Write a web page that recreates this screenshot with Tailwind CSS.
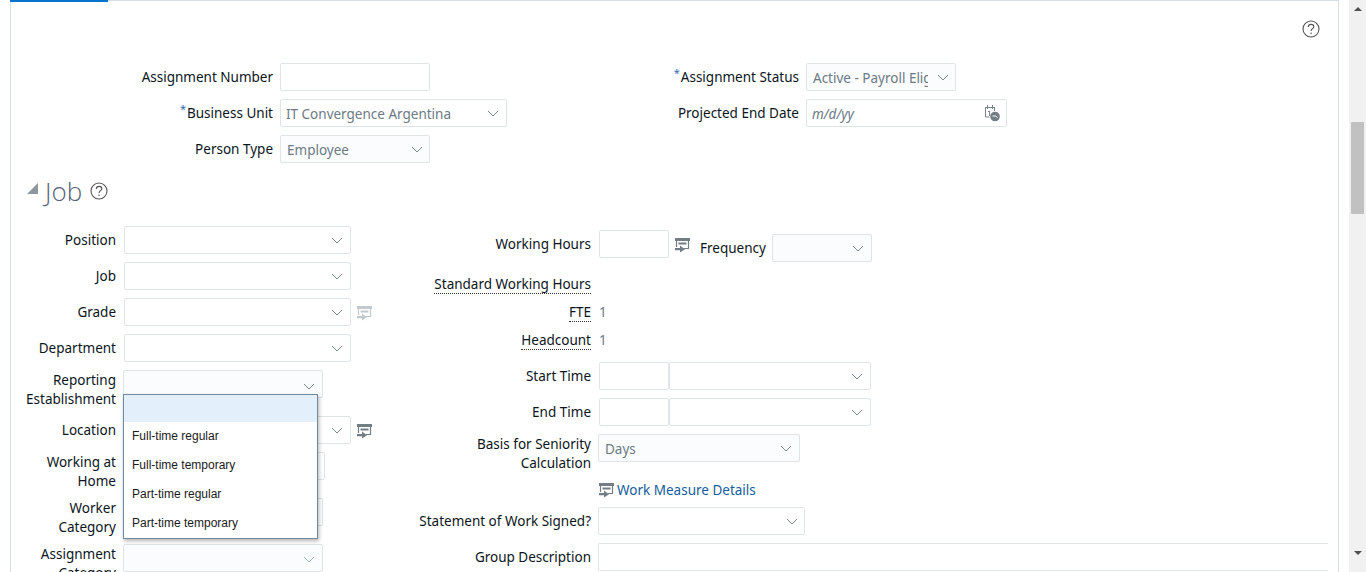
<!DOCTYPE html>
<html lang="en">
<head>
  <meta charset="UTF-8"/>
  <title>Assignment</title>
  <script src="https://cdn.jsdelivr.net/npm/@tailwindcss/browser@4"></script>
</head>
<body class="h-[572px] overflow-hidden bg-white font-['Noto_Sans',sans-serif] text-[13.5px] text-[#0b1520]">
  <!-- Shared icons -->
  <svg class="hidden">
    <symbol id="chev" viewBox="0 0 12 7"><path d="M1 1l5 5 5-5" fill="none" stroke="currentColor" stroke-width="1"/></symbol>
    <symbol id="detail" viewBox="0 0 15 16">
      <path d="M0 1h15v3H0z" fill="currentColor"/>
      <path d="M1.5 4v6M13.5 4v7.5H9" fill="none" stroke="currentColor" stroke-width="1.2"/>
      <path d="M3.5 5.5h8v2h-8z" fill="currentColor"/>
      <path d="M0 11h5V8.5l5 3.7-5 3.3v-2.300H0z" fill="currentColor"/>
    </symbol>
    <symbol id="help" viewBox="0 0 18 18">
      <circle cx="9" cy="9" r="8" fill="none" stroke="currentColor" stroke-width="1.1"/>
      <path d="M6.300 7c0-1.700 1.200-2.600 2.800-2.600s2.700 1 2.700 2.300c0 2-2.700 2-2.700 4.300" fill="none" stroke="currentColor" stroke-width="1.100"/>
      <circle cx="9.100" cy="13.300" r=".8" fill="currentColor"/>
    </symbol>
  </svg>

  <div class="flex h-[572px]">
    <!-- Main panel -->
    <main class="w-[1349px] pl-[10px] pr-[10px]">
      <div class="h-[572px] border-x border-t border-[#d6dfe6] relative">
        <div class="absolute -top-px -left-px w-[98px] h-[2px] bg-[#0572ce]"></div>

        <div class="flex justify-end pr-[18px] pt-[19px] h-[62px]">
          <svg class="w-[18px] h-[18px] text-[#555]"><use href="#help"/></svg>
        </div>

        <!-- Assignment header fields -->
        <section class="flex">
          <div class="w-[600px] flex flex-col gap-2">
            <div class="flex gap-[7px]">
              <label class="w-[262px] h-7 flex items-center justify-end">Assignment Number</label>
              <input class="w-[150px] h-7 border border-[#dfe4e7] rounded-[2px]"/>
            </div>
            <div class="flex gap-[7px]">
              <label class="w-[262px] h-7 flex items-center justify-end"><sup class="text-[#2a6cb0] text-[11px] mt-[2px] mr-px">*</sup>Business Unit</label>
              <div class="w-[227px] h-7 border border-[#dfe4e7] rounded-[2px] flex items-center justify-between pl-[5px] pr-[7px] text-[#6c7a85]">
                <span class="pt-[2px]">IT Convergence Argentina</span>
                <svg class="w-[12px] h-[7px] text-[#7b8790]"><use href="#chev"/></svg>
              </div>
            </div>
            <div class="flex gap-[7px]">
              <label class="w-[262px] h-7 flex items-center justify-end">Person Type</label>
              <div class="w-[150px] h-7 border border-[#dfe4e7] rounded-[2px] bg-[#fbfcfd] flex items-center justify-between pl-[6px] pr-[6px] text-[#6c7a85]">
                <span class="pt-[2px]">Employee</span>
                <svg class="w-[12px] h-[7px] text-[#7b8790]"><use href="#chev"/></svg>
              </div>
            </div>
          </div>
          <div class="flex flex-col gap-2">
            <div class="flex gap-[7px]">
              <label class="w-[188px] h-7 flex items-center justify-end"><sup class="text-[#2a6cb0] text-[11px] mt-[2px] mr-px">*</sup>Assignment Status</label>
              <div class="w-[150px] h-7 border border-[#dfe4e7] rounded-[2px] bg-[#fbfcfd] flex items-center justify-between pl-[6px] pr-[6px] text-[#6c7a85]">
                <span class="w-[115px] pt-[2px] overflow-hidden whitespace-nowrap">Active - Payroll Eligible</span>
                <svg class="w-[12px] h-[7px] text-[#7b8790]"><use href="#chev"/></svg>
              </div>
            </div>
            <div class="flex gap-[7px]">
              <label class="w-[188px] h-7 flex items-center justify-end">Projected End Date</label>
              <div class="w-[201px] h-7 border border-[#dfe4e7] rounded-[2px] flex items-center justify-between pl-[5px] pr-[6px] text-[#6c7a85] italic">
                <span class="pt-[2px]">m/d/yy</span>
                <svg class="w-[16px] h-[18px]" viewBox="0 0 16 18">
                  <path d="M1 3.500h9.500M1.500 3v10h4" fill="none" stroke="#7b858c"/>
                  <path d="M10.500 3v4" stroke="#7b858c"/>
                  <path d="M3.500 1v4M8.500 1v4" stroke="#7b858c"/>
                  <path d="M4 7h2v5H5V8H4z" fill="#7b858c"/>
                  <circle cx="11" cy="12.500" r="4.800" fill="#737d84"/>
                  <path d="M8.500 12h3l2 1.500" fill="none" stroke="#fff"/>
                </svg>
              </div>
            </div>
          </div>
        </section>

        <!-- Job heading -->
        <div class="flex items-center h-[28px] mt-[14px] pl-[16px]">
          <svg class="w-[11px] h-[11px] mb-[6px]" viewBox="0 0 11 11"><path d="M11 0v11H0z" fill="#8f979d"/></svg>
          <h2 class="ml-[7px] font-['Open_Sans',sans-serif] font-light text-[26px] text-[#566378]">Job</h2>
          <svg class="ml-[8px] w-[18px] h-[18px] text-[#555]"><use href="#help"/></svg>
        </div>

        <section class="flex mt-[21px]">
          <!-- Job left column -->
          <div class="w-[375px] flex flex-col gap-2">
            <div class="flex">
              <label class="w-[105px] h-7 flex items-center justify-end">Position</label>
              <div class="ml-2 w-[227px] h-7 border border-[#dfe4e7] rounded-[2px] flex items-center justify-end pr-[7px]"><svg class="w-[12px] h-[7px] text-[#7b8790]"><use href="#chev"/></svg></div>
            </div>
            <div class="flex">
              <label class="w-[105px] h-7 flex items-center justify-end">Job</label>
              <div class="ml-2 w-[227px] h-7 border border-[#dfe4e7] rounded-[2px] flex items-center justify-end pr-[7px]"><svg class="w-[12px] h-[7px] text-[#7b8790]"><use href="#chev"/></svg></div>
            </div>
            <div class="flex items-center">
              <label class="w-[105px] h-7 flex items-center justify-end">Grade</label>
              <div class="ml-2 w-[227px] h-7 border border-[#dfe4e7] rounded-[2px] flex items-center justify-end pr-[7px]"><svg class="w-[12px] h-[7px] text-[#7b8790]"><use href="#chev"/></svg></div>
              <svg class="ml-[6px] mt-[2px] w-[15px] h-[16px] text-[#c3c9cd]"><use href="#detail"/></svg>
            </div>
            <div class="flex">
              <label class="w-[105px] h-7 flex items-center justify-end">Department</label>
              <div class="ml-2 w-[227px] h-7 border border-[#dfe4e7] rounded-[2px] flex items-center justify-end pr-[7px]"><svg class="w-[12px] h-[7px] text-[#7b8790]"><use href="#chev"/></svg></div>
            </div>
            <div class="flex relative h-[38px]">
              <label class="w-[105px] pt-px leading-[19px] text-right">Reporting Establishment</label>
              <div class="ml-[7px] w-[200px] h-7 border border-[#dfe4e7] rounded-[2px] bg-[#fbfcfd] flex items-center justify-end pr-[7px] pt-[5px]"><svg class="w-[12px] h-[7px] text-[#7b8790]"><use href="#chev"/></svg></div>
              <!-- Open list over the fields below -->
              <ul class="absolute z-10 left-[112px] top-[24px] w-[195px] h-[145px] bg-white border border-[#6f8aa1] shadow-[1px_2px_4px_rgba(0,0,0,0.3)] font-['Liberation_Sans',sans-serif] text-[12px] text-[#1a1a1a]">
                <li class="h-[27px] bg-[#e3f0fb]"></li>
                <li class="h-[29px] flex items-center pl-2 pb-[2px]">Full-time regular</li>
                <li class="h-[29px] flex items-center pl-2 pb-[2px]">Full-time temporary</li>
                <li class="h-[29px] flex items-center pl-2 pb-[2px]">Part-time regular</li>
                <li class="h-[29px] flex items-center pl-2 pb-[2px]">Part-time temporary</li>
              </ul>
            </div>
            <div class="flex items-center">
              <label class="w-[105px] h-7 flex items-center justify-end">Location</label>
              <div class="ml-2 w-[227px] h-7 border border-[#dfe4e7] rounded-[2px] flex items-center justify-end pr-[7px]"><svg class="w-[12px] h-[7px] text-[#7b8790]"><use href="#chev"/></svg></div>
              <svg class="ml-[6px] mt-[2px] w-[15px] h-[16px] text-[#737d84]"><use href="#detail"/></svg>
            </div>
            <div class="flex h-[38px]">
              <label class="w-[105px] pt-px leading-[19px] text-right">Working at Home</label>
              <div class="ml-[7px] w-[202px] h-7 border border-[#dfe4e7] rounded-[2px]"></div>
            </div>
            <div class="flex h-[38px]">
              <label class="w-[105px] pt-px leading-[19px] text-right">Worker Category</label>
              <div class="ml-[7px] w-[200px] h-7 border border-[#dfe4e7] rounded-[2px]"></div>
            </div>
            <div class="flex h-[38px]">
              <label class="w-[105px] pt-px leading-[19px] text-right">Assignment Category</label>
              <div class="ml-[7px] w-[200px] h-7 border border-[#dfe4e7] rounded-[2px] bg-[#fbfcfd] flex items-center justify-end pr-[7px] pt-[3px]"><svg class="w-[12px] h-[7px] text-[#9cc4e8]"><use href="#chev"/></svg></div>
            </div>
          </div>

          <!-- Job right column -->
          <div class="flex-1 pt-[4px] pr-[10px] flex flex-col">
            <div class="flex h-[32px]">
              <label class="w-[205px] h-7 flex items-center justify-end">Working Hours</label>
              <div class="ml-2 w-[70px] h-7 border border-[#dfe4e7] rounded-[2px]"></div>
              <svg class="ml-[6px] mt-[7px] w-[15px] h-[16px] text-[#737d84]"><use href="#detail"/></svg>
              <span class="ml-[10px] mt-[4px] h-7 flex items-center">Frequency</span>
              <div class="ml-[6px] mt-[4px] w-[100px] h-7 border border-[#dfe4e7] rounded-[2px] bg-[#fbfcfd] flex items-center justify-end pr-[7px]"><svg class="w-[12px] h-[7px] text-[#7b8790]"><use href="#chev"/></svg></div>
            </div>
            <div class="flex mt-2 h-7 items-center justify-start">
              <label class="w-[205px] text-right"><span class="border-b border-dotted border-[#333] leading-[18px] inline-block">Standard Working Hours</span></label>
            </div>
            <div class="flex h-7 items-center">
              <label class="w-[205px] text-right"><span class="border-b border-dotted border-[#333] leading-[18px] inline-block">FTE</span></label>
              <span class="ml-2 text-[#6c7a85]">1</span>
            </div>
            <div class="flex h-7 items-center">
              <label class="w-[205px] text-right"><span class="border-b border-dotted border-[#333] leading-[18px] inline-block">Headcount</span></label>
              <span class="ml-2 text-[#6c7a85]">1</span>
            </div>
            <div class="flex mt-2">
              <label class="w-[205px] h-7 flex items-center justify-end">Start Time</label>
              <div class="ml-2 w-[70px] h-7 border border-[#dfe4e7] rounded-[2px]"></div>
              <div class="w-[202px] h-7 border border-[#dfe4e7] rounded-[2px] flex items-center justify-end pr-[7px]"><svg class="w-[12px] h-[7px] text-[#7b8790]"><use href="#chev"/></svg></div>
            </div>
            <div class="flex mt-2">
              <label class="w-[205px] h-7 flex items-center justify-end">End Time</label>
              <div class="ml-2 w-[70px] h-7 border border-[#dfe4e7] rounded-[2px]"></div>
              <div class="w-[202px] h-7 border border-[#dfe4e7] rounded-[2px] flex items-center justify-end pr-[7px]"><svg class="w-[12px] h-[7px] text-[#7b8790]"><use href="#chev"/></svg></div>
            </div>
            <div class="flex mt-2 h-[38px]">
              <label class="w-[205px] pt-px leading-[19px] text-right">Basis for Seniority<br/>Calculation</label>
              <div class="ml-[7px] w-[202px] h-7 border border-[#dfe4e7] rounded-[2px] bg-[#fbfcfd] flex items-center justify-between pl-[6px] pr-[7px] text-[#6c7a85]">
                <span class="pt-[2px]">Days</span>
                <svg class="w-[12px] h-[7px] text-[#7b8790]"><use href="#chev"/></svg>
              </div>
            </div>
            <div class="flex h-7 mt-[4px] items-center pl-[213px]">
              <svg class="w-[15px] h-[16px] text-[#737d84]"><use href="#detail"/></svg>
              <a class="ml-[3px] text-[#145c9e]">Work Measure Details</a>
            </div>
            <div class="flex mt-[3px]">
              <label class="w-[205px] h-7 flex items-center justify-end">Statement of Work Signed?</label>
              <div class="ml-[7px] w-[207px] h-7 border border-[#dfe4e7] rounded-[2px] flex items-center justify-end pr-[6px]"><svg class="w-[12px] h-[7px] text-[#7b8790]"><use href="#chev"/></svg></div>
            </div>
            <div class="flex mt-2">
              <label class="w-[205px] h-7 flex items-center justify-end">Group Description</label>
              <div class="ml-[7px] flex-1 h-7 border border-r-0 border-[#dfe4e7] rounded-l-[2px]"></div>
            </div>
          </div>
        </section>
      </div>
    </main>

    <!-- Scrollbar -->
    <div class="w-[17px] h-[572px] bg-[#f1f1f1] flex flex-col items-center">
      <svg class="mt-[7px] w-[8px] h-[4px]" viewBox="0 0 8 4"><path d="M4 0l4 4H0z" fill="#505050"/></svg>
      <div class="mt-[111px] w-[13px] h-[92px] bg-[#c1c1c1]"></div>
      <svg class="mt-[337px] w-[8px] h-[4px]" viewBox="0 0 8 4"><path d="M0 0h8L4 4z" fill="#505050"/></svg>
    </div>
  </div>
</body>
</html>
